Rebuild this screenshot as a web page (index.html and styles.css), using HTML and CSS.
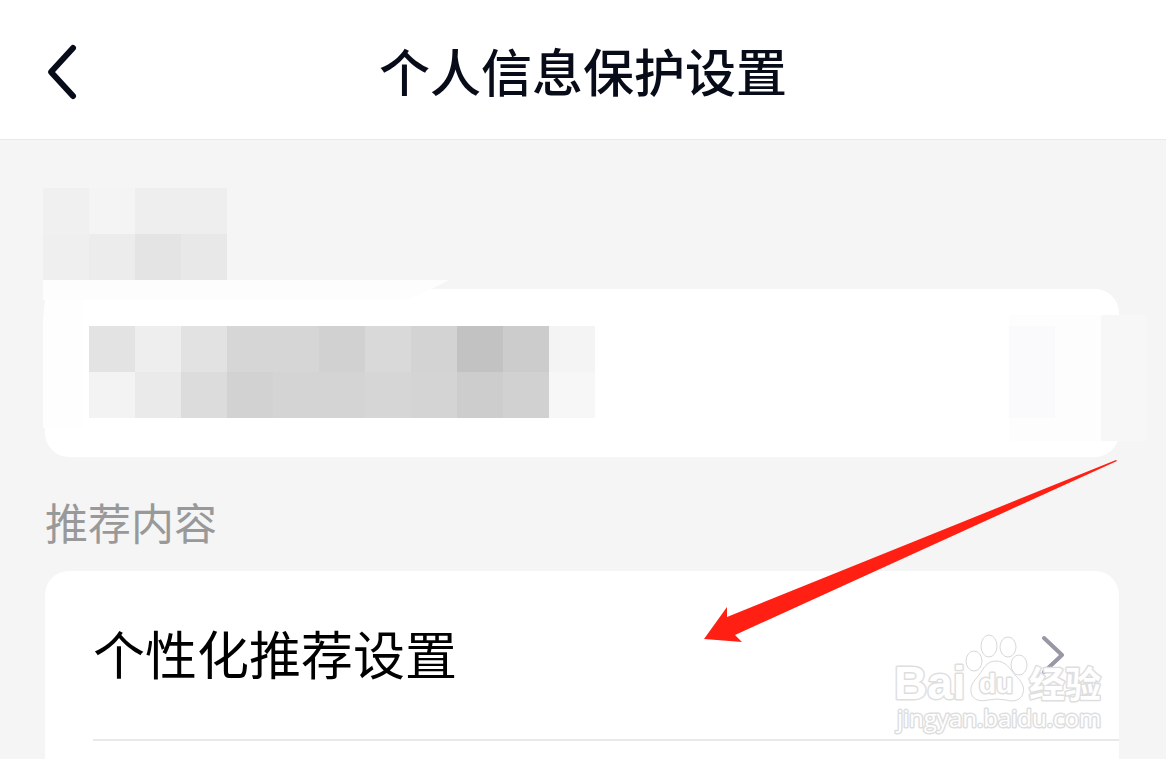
FILE: index.html
```
<!DOCTYPE html>
<html lang="zh-CN">
<head>
    <meta charset="UTF-8">
    <meta name="viewport" content="width=device-width, initial-scale=1.0">
    <title>个人信息保护设置</title>
    <link rel="stylesheet" href="styles.css">
</head>
<body>
    <header class="header">
        <button class="back-btn" type="button" aria-label="返回">
            <svg width="36" height="60" viewBox="0 0 36 60" aria-hidden="true">
                <path d="M29 6 L7 30 L29 54"/>
            </svg>
        </button>
        <h1>个人信息保护设置</h1>
    </header>

    <main class="content">
        <section class="masked-section">
            <svg class="mosaic-title" width="184" height="92" viewBox="0 0 184 92" shape-rendering="crispEdges" aria-hidden="true">
                <rect width="46" height="46" fill="#f0f0f0"/>
                <rect x="46" width="46" height="46" fill="#f4f4f4"/>
                <rect x="92" width="92" height="46" fill="#eeeeee"/>
                <rect y="46" width="46" height="46" fill="#efefef"/>
                <rect x="46" y="46" width="46" height="46" fill="#ececec"/>
                <rect x="92" y="46" width="46" height="46" fill="#e4e4e4"/>
                <rect x="138" y="46" width="46" height="46" fill="#e8e8e8"/>
            </svg>
            <div class="card masked-card">
                <!-- smudges around the masked row -->
                <svg class="smudge-left" width="406" height="148" viewBox="0 0 406 148" aria-hidden="true">
                    <path d="M0 0 H406 Q390 9 364 20 H0Z" fill="#fdfdfd"/>
                    <path d="M2 20 H40 V148 H0 V40Z" fill="#fefefe"/>
                </svg>
                <svg class="smudge-right" width="138" height="126" viewBox="0 0 138 126" aria-hidden="true">
                    <rect width="92" height="126" fill="#fdfdfd"/>
                    <rect y="11" width="46" height="92" fill="#fafafd"/>
                    <rect x="92" width="46" height="126" rx="2" fill="#f7f7f7"/>
                </svg>
                <svg class="mosaic-row" width="506" height="92" viewBox="0 0 506 92" shape-rendering="crispEdges" aria-hidden="true">
                    <rect width="46" height="46" fill="#e3e3e3"/>
                    <rect x="46" width="46" height="46" fill="#eeeeee"/>
                    <rect x="92" width="46" height="46" fill="#e2e2e2"/>
                    <rect x="138" width="92" height="46" fill="#d6d6d6"/>
                    <rect x="230" width="46" height="46" fill="#d1d1d1"/>
                    <rect x="276" width="46" height="46" fill="#d9d9d9"/>
                    <rect x="322" width="46" height="46" fill="#d3d3d3"/>
                    <rect x="368" width="46" height="46" fill="#c2c2c2"/>
                    <rect x="414" width="46" height="46" fill="#cccccc"/>
                    <rect x="460" width="46" height="46" fill="#f4f4f4"/>
                    <rect y="46" width="46" height="46" fill="#f3f3f3"/>
                    <rect x="46" y="46" width="46" height="46" fill="#eaeaea"/>
                    <rect x="92" y="46" width="46" height="46" fill="#dcdcdc"/>
                    <rect x="138" y="46" width="46" height="46" fill="#d2d2d2"/>
                    <rect x="184" y="46" width="92" height="46" fill="#d4d4d4"/>
                    <rect x="276" y="46" width="46" height="46" fill="#d6d6d6"/>
                    <rect x="322" y="46" width="46" height="46" fill="#d4d4d4"/>
                    <rect x="368" y="46" width="46" height="46" fill="#cdcdcd"/>
                    <rect x="414" y="46" width="46" height="46" fill="#d1d1d1"/>
                    <rect x="460" y="46" width="46" height="46" fill="#f7f7f7"/>
                </svg>
            </div>
        </section>

        <section class="recommend-section">
            <h2>推荐内容</h2>
            <div class="card list-card">
                <a class="row" href="#">
                    <span>个性化推荐设置</span>
                    <svg class="chevron" width="26" height="42" viewBox="0 0 26 42" aria-hidden="true">
                        <path d="M4 6 L22 23 L4 40"/>
                    </svg>
                </a>

                <svg class="arrow" width="413" height="182" viewBox="0 0 413 182" aria-hidden="true">
                    <path d="M0 179 L23 147 V157 L412 0 L413 1 L31 175 L38 182Z"/>
                </svg>

                <svg class="watermark" width="216" height="106" viewBox="0 0 216 106">
                    <text class="wm-bai" x="0" y="67">Bai</text>
                    <ellipse cx="80" cy="29" rx="8" ry="10"/>
                    <ellipse cx="95" cy="14" rx="8" ry="11"/>
                    <ellipse cx="114" cy="15" rx="8" ry="10"/>
                    <ellipse cx="125" cy="33" rx="8" ry="10"/>
                    <path d="M102 29 C112 29 116 37 121 43 C127 49 131 54 129 61 C127 69 119 70 112 68 Q103 66 94 68 C86 70 78 68 77 60 C76 53 80 49 85 43 C90 36 93 29 102 29Z"/>
                    <text class="wm-du" x="85" y="61">du</text>
                    <text class="wm-cn" x="135" y="66">经验</text>
                    <text class="wm-url" x="3" y="95">jingyan.baidu.com</text>
                </svg>
            </div>
        </section>
    </main>
</body>
</html>
```
FILE: styles.css
```
* {
    box-sizing: border-box;
}
body {
    display: flex;
    flex-direction: column;
    min-height: 100vh;
    margin: 0;
    background: #f5f5f5;
    color: #000;
    font-family: "Noto Sans CJK SC", "Noto Sans", sans-serif;
}
svg {
    display: block;
}
.header {
    display: grid;
    grid-template-columns: 80px 1fr 80px;
    align-items: center;
    height: 140px;
    background: #fff;
    border-bottom: 1px solid #e9e9e9;
}
.header h1 {
    margin: 0;
    font-size: 51px;
    font-weight: 500;
    line-height: 76px;
    text-align: center;
    color: #080b18;
}
.back-btn {
    justify-self: end;
    padding: 4px 0 0;
    border: none;
    background: none;
    cursor: pointer;
}
.back-btn path {
    fill: none;
    stroke: #080b18;
    stroke-width: 6;
    stroke-linecap: round;
    stroke-linejoin: round;
}
.content {
    flex: 1;
    display: flex;
    flex-direction: column;
    padding: 48px 47px 0 45px;
}
.card {
    position: relative;
    background: #fff;
    border-radius: 24px;
}
.mosaic-title {
    margin-left: -2px;
}
.masked-card {
    margin-top: 9px;
    padding: 37px 44px 39px;
}
.mosaic-row {
    position: relative;
}
.smudge-left {
    position: absolute;
    top: -9px;
    left: -2px;
}
.smudge-right {
    position: absolute;
    top: 26px;
    right: -28px;
}
.recommend-section {
    flex: 1;
    display: flex;
    flex-direction: column;
}
.recommend-section h2 {
    margin: 34px 0 20px;
    font-size: 43px;
    font-weight: 400;
    line-height: 60px;
    color: #999;
}
.list-card {
    flex: 1;
    border-radius: 24px 24px 0 0;
}
.row {
    display: flex;
    align-items: center;
    justify-content: space-between;
    margin-left: 48px;
    padding: 44px 53px 48px 0;
    border-bottom: 2px solid #e9e9e9;
    font-size: 52px;
    line-height: 76px;
    color: #000;
    text-decoration: none;
}
.chevron path {
    fill: none;
    stroke: #9797a5;
    stroke-width: 4;
    stroke-linecap: round;
    stroke-linejoin: round;
}
.arrow {
    position: absolute;
    top: -111px;
    right: 2px;
    fill: #ff2013;
    pointer-events: none;
}
.watermark {
    position: absolute;
    top: 61px;
    right: 9px;
    fill: #fff;
    stroke: #d8d8d8;
    stroke-width: 1;
    pointer-events: none;
}
.watermark text {
    font-family: "Liberation Sans", sans-serif;
    font-weight: 700;
    stroke: #dedede;
    stroke-width: 3;
    stroke-linejoin: round;
    paint-order: stroke;
}
.watermark .wm-bai {
    font-size: 46px;
}
.watermark .wm-du {
    font-size: 28px;
}
.watermark .wm-cn {
    font-family: "Noto Sans CJK SC", sans-serif;
    font-size: 36px;
}
.watermark .wm-url {
    font-family: "Open Sans", sans-serif;
    font-size: 24px;
    font-weight: 400;
}
```
